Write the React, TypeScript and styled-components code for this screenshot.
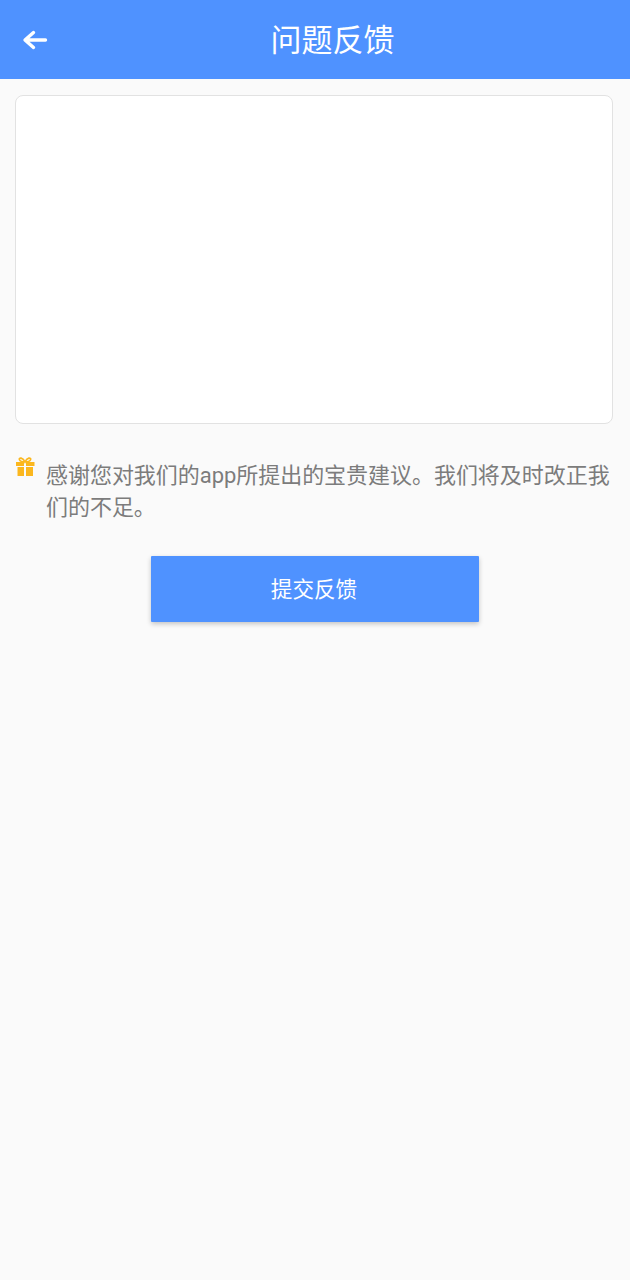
import React from 'react';
import styled, { createGlobalStyle } from 'styled-components';

const GlobalStyle = createGlobalStyle`
  html, body {
    margin: 0;
    padding: 0;
    background: #fafafa;
  }
  body {
    font-family: Roboto, "Noto Sans CJK SC", sans-serif;
  }
`;

const Page = styled.div`
  width: 630px;
  height: 1280px;
  background: #fafafa;
  overflow: hidden;
`;

const Header = styled.header`
  position: relative;
  display: flex;
  align-items: center;
  justify-content: center;
  height: 79px;
  background: #4f92ff;
`;

const BackButton = styled.button`
  position: absolute;
  left: 22px;
  top: 28px;
  display: flex;
  width: 26px;
  height: 24px;
  padding: 0;
  border: 0;
  background: none;
`;

const Title = styled.h1`
  margin: 0;
  padding-left: 35px;
  padding-top: 2px;
  color: #fff;
  font-size: 31px;
  font-weight: 400;
  line-height: 77px;
`;

const Content = styled.main`
  padding: 16px 17px 0 15px;
`;

const Feedback = styled.textarea`
  display: block;
  box-sizing: border-box;
  width: 100%;
  height: 329px;
  border: 1px solid #e2e2e2;
  border-radius: 8px;
  background: #fff;
  resize: none;
  outline: none;
`;

const Notice = styled.div`
  display: flex;
  align-items: flex-start;
  gap: 11px;
  margin-top: 36px;
  margin-right: -15px;
`;

const GiftIcon = styled.svg`
  flex: none;
  width: 20px;
  height: 19px;
  margin-top: -3px;
`;

const NoticeText = styled.p`
  margin: 0;
  color: #7c7c7c;
  font-size: 22px;
  letter-spacing: -0.04px;
  line-height: 32px;
`;

const Actions = styled.div`
  display: flex;
  justify-content: center;
  margin-top: 32px;
  padding-left: 2px;
`;

const Submit = styled.button`
  width: 328px;
  height: 66px;
  padding: 0 2px 4px 0;
  border: 0;
  border-radius: 1px;
  background: #4f92ff;
  box-shadow: 0 2px 5px rgba(0, 0, 0, 0.22);
  color: #fff;
  font-family: inherit;
  font-size: 21.6px;
`;

export default function App() {
  return (
    <Page>
      <GlobalStyle />
      <Header>
        <BackButton aria-label="返回">
          <svg width="26" height="24" viewBox="0 0 26 24" fill="none">
            <path
              d="M11.5 4.5 L3 12 L11.5 19.5 M4 12 H23.5"
              stroke="#fff"
              strokeWidth="3.4"
              strokeLinecap="round"
              strokeLinejoin="round"
            />
          </svg>
        </BackButton>
        <Title>问题反馈</Title>
      </Header>
      <Content>
        <Feedback />
        <Notice>
          <GiftIcon viewBox="0 0 20 19">
            <path
              d="M1 5 H9 V9 H1 Z M11 5 H19.5 V9 H11 Z M2.5 10 H9 V19 H2.5 Z M11 10 H18 V19 H11 Z"
              fill="#fbb71e"
            />
            <path
              d="M10 5 C8 0.5 3.5 0 4.5 2.8 C5 4.2 8 5 10 5 C12 5 15 4.2 15.5 2.8 C16.5 0 12 0.5 10 5 Z"
              fill="none"
              stroke="#fbb71e"
              strokeWidth="1.7"
            />
          </GiftIcon>
          <NoticeText>感谢您对我们的app所提出的宝贵建议。我们将及时改正我们的不足。</NoticeText>
        </Notice>
        <Actions>
          <Submit>提交反馈</Submit>
        </Actions>
      </Content>
    </Page>
  );
}
